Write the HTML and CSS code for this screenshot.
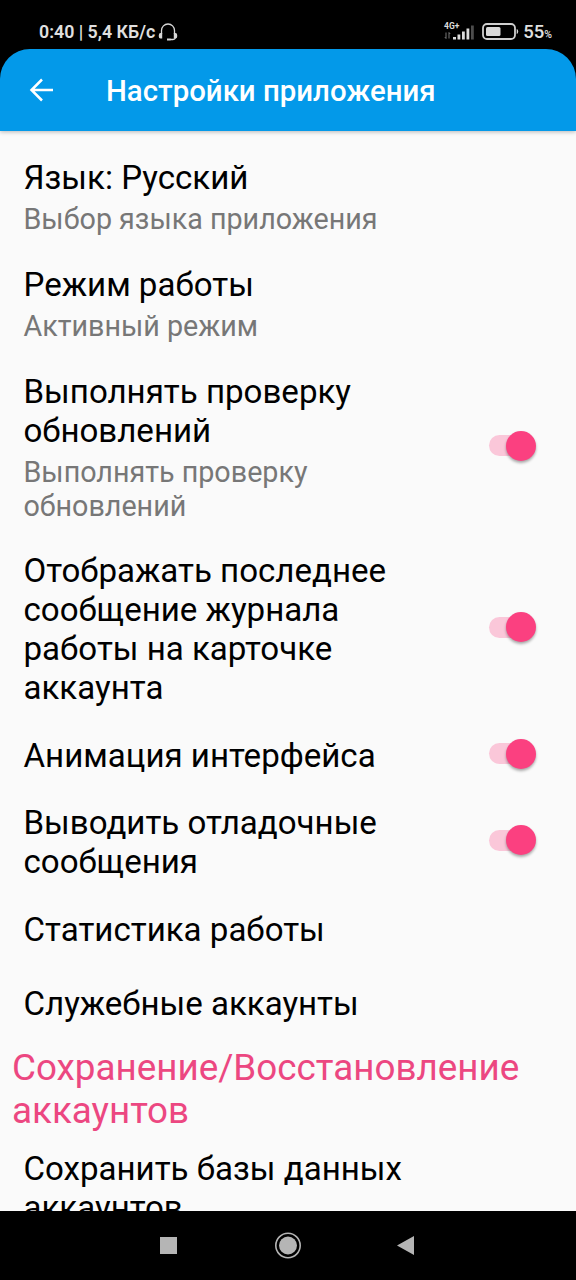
FILE: index.html
```html
<!DOCTYPE html>
<html lang="ru">
<head>
<meta charset="utf-8">
<title>Настройки приложения</title>
<link rel="stylesheet" href="styles.css">
</head>
<body>
<div class="phone">
  <div class="status">
    <span class="clock">0:40 | 5,4 КБ/с</span>
    <svg class="headphones" width="20" height="20" viewBox="0 0 20 20" fill="none" stroke="#d8d8d8" stroke-width="1.300"><path d="M3.500 12V8.500a6.500 6.500 0 0 1 13 0V12M17.500 15.500q-.500 2-2.500 2h-3"/><path fill="#d8d8d8" stroke="none" d="M4.200 11v5.500H2.500Q.800 16.500.800 14.500v-1.300Q.800 11 2.500 11zM15.800 11v5.500h1.700q1.700 0 1.700-2v-1.300q0-2.200-1.700-2.200zM9 16.500h3.500v2H9z"/></svg>
    <span class="spacer"></span>
    <svg class="signal" width="32" height="20" viewBox="0 0 32 20" fill="#dcdcdc"><text x="1" y="7" class="net">4G+</text><path d="M3 10.500v6M1.800 15L3 16.500M6 16.500v-6l1.200 1.500" fill="none" stroke="#777" stroke-width="1"/><path d="M10 15h3v2.500h-3zM14.500 12.500h2.800v5h-2.800zM19 9.500h2.800v8H19zM23.500 6.500h2.800v11h-2.800z"/><path fill="#4c4c4c" d="M28 3.500h2.800v14H28z"/></svg>
    <svg class="battery" width="37" height="18" viewBox="0 0 37 18"><rect x="1" y="1" width="32" height="15" rx="4" fill="none" stroke="#cfcfcf" stroke-width="1.800"/><rect x="4" y="4" width="14.500" height="9" rx="1.500" fill="#d8d8d8"/><path d="M34.700 6q1.500.300 1.500 2.500t-1.500 2.500z" fill="#d8d8d8"/></svg>
    <span class="percent">55<small>%</small></span>
  </div>
  <header class="bar">
    <svg class="back" width="26" height="26" viewBox="0 0 26 26" fill="none" stroke="#fff" stroke-width="2.500"><path d="M25 12H3.500M14 1.500L3.500 12 14 22.500"/></svg>
    <h1>Настройки приложения</h1>
  </header>
  <main class="list">
    <section class="item first"><h2>Язык: Русский</h2><p>Выбор языка приложения</p></section>
    <section class="item mode"><h2>Режим работы</h2><p>Активный режим</p></section>
    <section class="item updates"><div class="copy"><h2>Выполнять проверку<br>обновлений</h2><p>Выполнять проверку<br>обновлений</p></div><i class="toggle"></i></section>
    <section class="item journal"><h2>Отображать последнее<br>сообщение журнала<br>работы на карточке<br>аккаунта</h2><i class="toggle"></i></section>
    <section class="item animation"><h2>Анимация интерфейса</h2><i class="toggle"></i></section>
    <section class="item debug"><h2>Выводить отладочные<br>сообщения</h2><i class="toggle"></i></section>
    <section class="item stats"><h2>Статистика работы</h2></section>
    <section class="item service"><h2>Служебные аккаунты</h2></section>
    <h3 class="category">Сохранение/Восстановление<br>аккаунтов</h3>
    <section class="item save"><h2>Сохранить базы данных<br>аккаунтов</h2></section>
  </main>
  <nav class="nav">
    <svg width="576" height="69" viewBox="0 0 576 69"><path fill="#b5b5b5" d="M160 26h17v17h-17zM414 25v19l-17-9.500z"/><circle cx="288" cy="34.500" r="12.200" fill="none" stroke="#b5b5b5" stroke-width="1.600"/><circle cx="288" cy="34.500" r="9" fill="#b5b5b5"/></svg>
  </nav>
</div>
</body>
</html>
```
FILE: styles.css
```css
* { box-sizing: border-box; }
body { margin: 0; background: #000; font-family: Roboto, "Noto Sans", sans-serif; }
h1, h2, h3, p { margin: 0; font-weight: 400; white-space: nowrap; }
.phone { width: 576px; height: 1280px; display: flex; flex-direction: column; overflow: hidden; background: #000; }
.status { height: 49px; padding: 14px 24px 0 39px; display: flex; align-items: center; color: #e0e0e0; flex: none; }
.clock { font-size: 17.8px; font-weight: 600; }
.headphones { margin-left: 3px; }
.spacer { flex: 1; }
.net { font: 700 8.5px Roboto, sans-serif; }
.battery { margin-left: 7px; }
.percent { font-size: 18.5px; font-weight: 500; margin-left: 4px; }
.percent small { font-size: 10.5px; }
.bar { height: 82px; flex: none; background: #0399e9; border-radius: 30px 30px 0 0; display: flex; align-items: center; padding: 2px 0 0 28px; color: #fff; position: relative; box-shadow: 0 1px 4px #0004; }
.bar h1 { font-size: 29.4px; font-weight: 500; margin-left: 52px; }
.list { flex: 1; min-height: 0; overflow: hidden; background: #fafafa; padding-top: 27px; }
.item { display: flex; padding: 0 38px 0 23.5px; justify-content: space-between; align-items: center; }
.item h2 { font-size: 33.1px; line-height: 39px; color: #000; }
.item p { font-size: 28.7px; line-height: 34px; color: #777; margin-top: 5px; }
.first, .mode { display: block; }
.first { margin-bottom: 29px; }
.mode { margin-bottom: 29px; }
.updates { margin-bottom: 28px; }
.journal { margin-bottom: 29px; }
.animation { margin-bottom: 28px; }
.debug { margin-bottom: 29px; }
.stats { margin-bottom: 35px; }
.category { color: #ec4781; font-size: 36.8px; line-height: 43px; padding-left: 12px; margin: 23px 0 17px; }
.toggle { width: 49px; height: 30px; flex: none; display: flex; align-items: center; position: relative; top: -2px; }
.toggle::before { content: ""; width: 40px; height: 21px; border-radius: 11px; background: #fac7d9; }
.toggle::after { content: ""; width: 30px; height: 30px; flex: none; margin-left: -23px; border-radius: 50%; background: #fb4080; box-shadow: 0 2px 3px #0005; }
.nav { height: 69px; flex: none; }
.nav svg { display: block; }
```
